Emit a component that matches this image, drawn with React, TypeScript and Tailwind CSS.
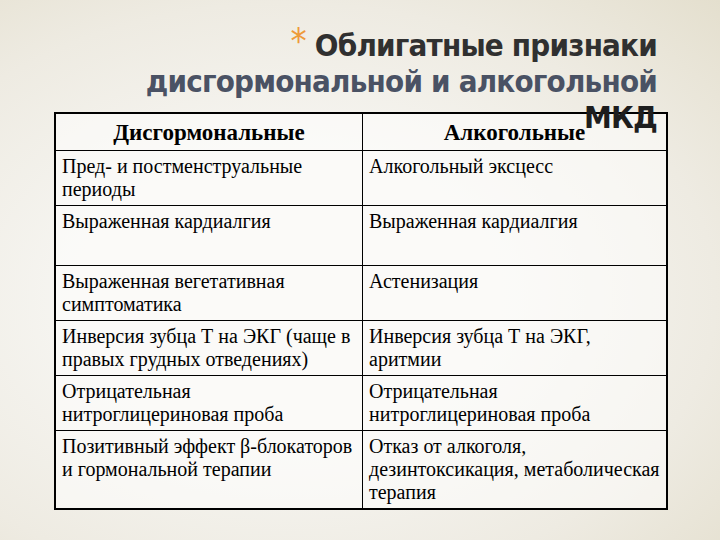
const rows: { left: string[]; right: string[]; h: string }[] = [
  { left: ['Пред- и постменструальные', 'периоды'], right: ['Алкогольный эксцесс'], h: 'h-[55px]' },
  { left: ['Выраженная кардиалгия'], right: ['Выраженная кардиалгия'], h: 'h-[60px]' },
  { left: ['Выраженная вегетативная', 'симптоматика'], right: ['Астенизация'], h: 'h-[55px]' },
  {
    left: ['Инверсия зубца Т на ЭКГ (чаще в', 'правых грудных отведениях)'],
    right: ['Инверсия зубца Т на ЭКГ,', 'аритмии'],
    h: 'h-[55px]',
  },
  {
    left: ['Отрицательная', 'нитроглицериновая проба'],
    right: ['Отрицательная', 'нитроглицериновая проба'],
    h: 'h-[55px]',
  },
  {
    left: ['Позитивный эффект β-блокаторов', 'и гормональной терапии'],
    right: ['Отказ от алкоголя,', 'дезинтоксикация, метаболическая', 'терапия'],
    h: 'h-[77px]',
  },
]

function Lines({ lines }: { lines: string[] }) {
  return (
    <>
      {lines.map((l, i) => (
        <div key={i} className="whitespace-nowrap">
          {l}
        </div>
      ))}
    </>
  )
}

export default function App() {
  return (
    <div className="h-[540px] w-[720px] overflow-hidden bg-[radial-gradient(ellipse_at_40%_55%,#f6f5f1_35%,#eeebe2_70%,#e4dfce_100%)]">
      {/* title */}
      <div className="relative z-10 pr-[63px] pt-[26px] text-right font-['DejaVu_Sans_Condensed','DejaVu_Sans',sans-serif] text-[31px] font-bold leading-[36px] tracking-[-0.8px]">
        <div className="text-[#303030]">
          <span className="mr-[9px] inline-block translate-y-[-3px] text-[36px] font-normal text-[#ee9a3a]">*</span>
          Облигатные признаки
        </div>
        <div className="text-[#4a5264]">дисгормональной и алкогольной</div>
        <div className="text-[#1e1e1e]">МКД</div>
      </div>

      {/* table */}
      <div className="-mt-[23px] ml-[54px] w-[614px] border-2 border-black bg-white/50 font-['Liberation_Serif',serif] text-[20px] leading-[23px] text-black">
        <div className="grid grid-cols-[307px_1fr]">
          <div className="flex h-[37px] items-center justify-center border-r border-b border-black text-[23px] font-bold">
            Дисгормональные
          </div>
          <div className="flex h-[37px] items-center justify-center border-b border-black text-[23px] font-bold">
            Алкогольные
          </div>
          {rows.map((r, i) => {
            const last = i === rows.length - 1
            return (
              <div key={i} className="contents">
                <div className={`${r.h} border-r border-black pt-[4px] pl-[6px] ${last ? '' : 'border-b'}`}>
                  <Lines lines={r.left} />
                </div>
                <div className={`${r.h} border-black pt-[4px] pl-[6px] ${last ? '' : 'border-b'}`}>
                  <Lines lines={r.right} />
                </div>
              </div>
            )
          })}
        </div>
      </div>
    </div>
  )
}
